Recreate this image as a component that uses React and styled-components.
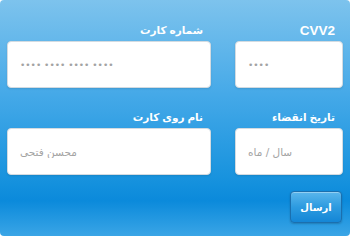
import React from 'react';
import styled, { createGlobalStyle } from 'styled-components';

const GlobalStyle = createGlobalStyle`
  html, body {
    margin: 0;
    padding: 0;
    background: #ffffff;
  }
  * { box-sizing: border-box; }
`;

export default function App() {
  return (
    <>
      <GlobalStyle />
      <Card dir="rtl">
        <Grid>
          <Field>
            <Label $latin>CVV2</Label>
            <Input placeholder="••••" $dots />
          </Field>
          <Field>
            <Label>شماره کارت</Label>
            <Input placeholder="•••• •••• •••• ••••" $dots />
          </Field>
          <Field>
            <Label>تاریخ انقضاء</Label>
            <Input placeholder="سال / ماه" />
          </Field>
          <Field>
            <Label>نام روی کارت</Label>
            <Input placeholder="محسن فتحی" />
          </Field>
        </Grid>
        <Actions>
          <Button>ارسال</Button>
        </Actions>
      </Card>
    </>
  );
}

const Card = styled.form`
  width: 350px;
  height: 236px;
  border-radius: 4px;
  padding: 24px 7px 0 7px;
  background: linear-gradient(to bottom, #7dc3ed 0%, #45a9e8 40%, #1893de 75%, #0b8adb 85%, #3aa5e6 100%);
  font-family: "Liberation Sans", "DejaVu Sans", sans-serif;
`;

const Grid = styled.div`
  display: grid;
  grid-template-columns: 108px 1fr;
  column-gap: 24px;
  row-gap: 23px;
`;

const Field = styled.div`
  display: flex;
  flex-direction: column;
`;

const Label = styled.label`
  color: #ffffff;
  font-size: ${p => (p.$latin ? '13.5px' : '10.5px')};
  font-weight: bold;
  line-height: 13px;
  height: 13px;
  padding-right: 8px;
  margin-bottom: 4px;
`;

const Input = styled.input`
  height: 47px;
  border: 1px solid #d3dbe1;
  border-radius: 4px;
  background: #ffffff;
  box-shadow: 0 1px 2px rgba(0, 0, 0, 0.1);
  direction: rtl;
  text-align: left;
  padding: 0 12px;
  font-family: "DejaVu Sans", sans-serif;
  font-size: ${p => (p.$dots ? '9px' : '10.5px')};
  color: #555;
  outline: none;

  &::placeholder {
    color: #a3a3a3;
  }
`;

const Actions = styled.div`
  display: flex;
  justify-content: flex-start;
  padding-right: 1px;
  margin-top: 16px;
`;

const Button = styled.button`
  width: 52px;
  height: 32px;
  border: 1px solid #1b6fae;
  border-radius: 4px;
  background: linear-gradient(to bottom, #5ab6ec 0%, #2d9be0 50%, #1486d6 100%);
  box-shadow: inset 0 1px 0 rgba(255, 255, 255, 0.35), 0 1px 2px rgba(0, 0, 0, 0.2);
  color: #ffffff;
  font-family: "DejaVu Sans", sans-serif;
  font-size: 10px;
  font-weight: bold;
  padding: 0;
`;
